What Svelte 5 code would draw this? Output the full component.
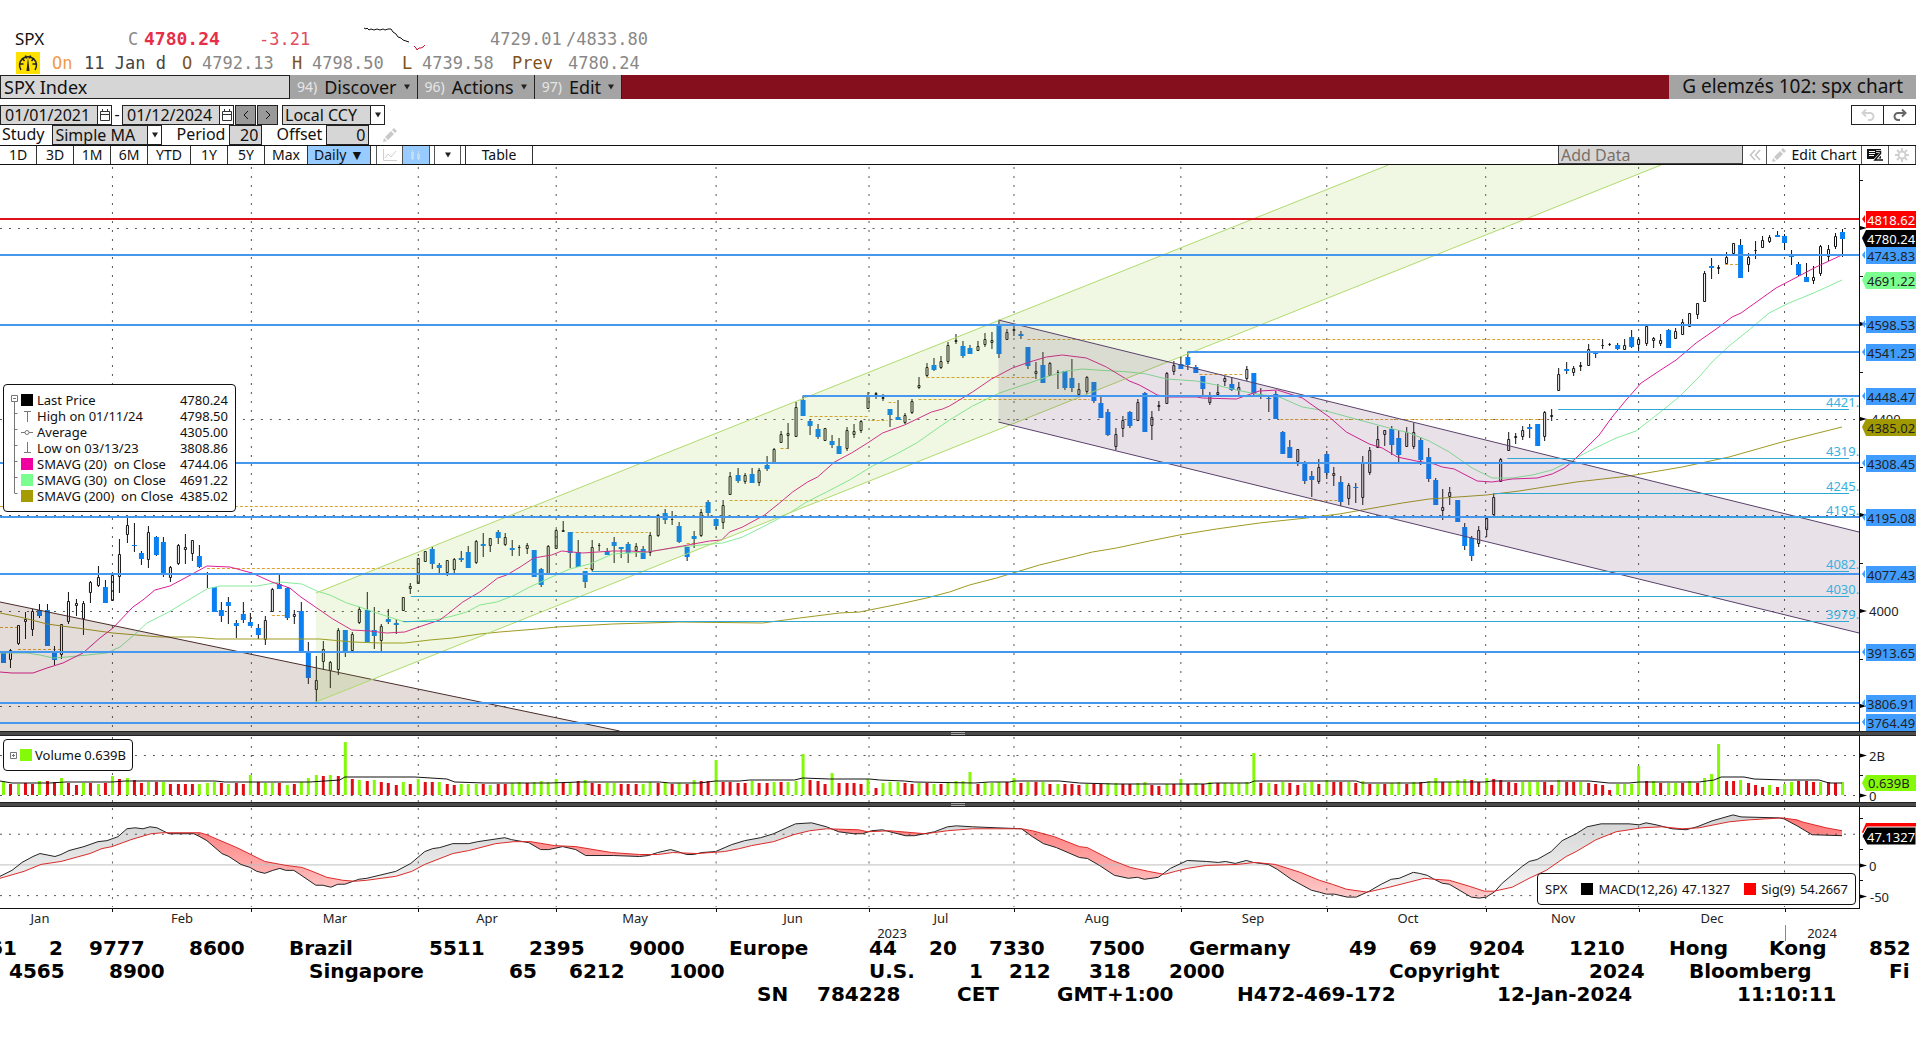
<script lang="ts">
  type Point = [number, number];

  // one entry per session: u/d, high, open-close top, open-close bottom, low
  const sessions = `
    d652,652,663,663 u649,650,660,668 u625,625,644,645 u612,619,622,639 u609,611,630,636 d604,610,616,618 d604,610,646,646 d646,653,660,665
    u624,624,655,659 u592,601,622,624 u599,603,606,616 u601,603,619,635 u581,582,593,603 u566,577,586,587 d580,587,603,603 u575,575,601,601
    u539,554,577,593 u518,525,535,543 d523,545,546,552 d551,553,559,565 u526,532,560,568 d536,537,555,556 d537,542,573,577 u566,567,578,582
    u544,545,564,565 u534,547,550,564 u540,540,554,561 d545,556,567,568 d572,573,574,588 d587,587,612,612 d602,610,616,622 d597,602,606,624
    d620,623,626,638 d602,614,620,623 d613,622,626,626 d624,628,635,639 u616,620,640,645 u588,589,612,612 d575,584,589,589 d587,588,618,620
    u610,614,617,624 d602,611,651,653 d642,653,678,684 u656,680,690,702 u641,649,662,670 u661,662,671,688 u628,630,670,675 d630,630,653,657
    u632,634,651,651 u607,609,623,624 d592,610,642,642 d607,630,636,649 u624,626,641,653 d609,619,622,624 d619,623,625,634 u597,597,611,611
    u583,586,589,594 u558,558,584,584 u551,551,562,562 d547,549,564,569 d563,565,568,575 u560,560,573,576 u558,559,570,575 d551,558,560,562
    d546,552,568,568 u540,541,563,564 d533,544,546,557 u538,538,546,552 d530,532,538,544 u533,537,545,546 d540,548,550,556 u545,547,548,556
    u543,545,549,554 d550,550,577,577 d568,569,585,587 u545,546,575,575 u529,530,549,549 u521,530,532,532 d532,532,553,568 d540,552,567,567
    d571,571,582,588 u540,547,570,571 u543,545,546,551 d548,551,555,555 d537,542,546,563 d547,547,549,558 d542,544,553,563 u543,546,551,557
    d546,549,559,559 u532,535,553,556 u514,515,536,537 d509,513,520,524 u511,519,520,525 d522,526,542,543 d547,547,557,561 d531,536,539,548
    u509,512,536,537 d500,502,513,518 d519,519,526,530 u500,505,523,529 u472,476,495,495 d468,475,481,483 u473,475,482,484 d468,474,483,483
    u468,470,483,486 d456,465,469,471 u448,449,464,464 u431,434,443,443 u423,433,436,449 u402,407,437,437 d396,400,416,416 d419,421,426,435
    d424,429,437,439 u428,428,441,441 d435,441,445,448 d438,446,454,454 u427,430,449,451 u424,431,435,438 u420,421,431,433 u392,396,409,409
    u392,393,395,399 u394,397,399,401 d409,409,415,427 d400,417,420,420 u413,415,423,424 u399,401,413,414 u377,385,388,389 u363,367,376,377
    d358,365,370,371 u356,361,368,369 u342,345,362,364 u334,340,342,344 d341,346,356,358 d345,348,354,354 u341,346,351,351 u333,339,345,347
    u332,340,343,349 d321,325,354,358 u329,332,340,340 u326,329,331,336 d331,334,336,339 d347,347,366,369 u362,371,374,379 d352,365,383,383
    u362,363,376,376 u370,372,373,389 d371,371,388,390 d359,378,388,392 u383,389,395,395 u376,377,392,394 d382,382,401,403 d397,403,418,418
    d409,412,435,436 u428,434,447,450 u416,420,429,437 d411,412,426,428 u399,402,421,421 d392,393,432,432 u411,417,426,440 u401,405,407,411
    u372,373,404,404 u361,365,372,375 d357,364,369,369 d352,357,365,370 d365,367,373,373 d376,376,389,397 u392,395,403,405 u384,392,395,396
    u376,378,382,386 d377,384,390,391 u382,387,391,395 u366,369,379,381 d373,373,394,397 u388,394,397,399 d396,398,399,412 d391,394,419,419
    d431,432,454,454 d440,447,458,458 u449,449,462,466 d461,462,481,484 d471,476,480,497 u459,467,482,484 d451,454,473,479 u467,473,476,486
    d476,482,502,506 u483,485,499,505 d483,487,488,503 u456,462,498,505 u447,450,473,475 u426,439,448,448 u430,430,435,446 d426,429,445,455
    d430,438,455,463 u427,432,447,447 u423,432,447,449 d437,440,460,465 d448,457,479,482 d478,480,505,505 u489,507,511,520 u487,492,497,505
    d500,500,522,522 d523,527,546,550 d536,538,556,561 u526,530,544,547 u518,518,530,537 u493,497,515,515 u458,459,482,482 u432,439,451,451
    u433,436,438,444 u426,430,437,440 d424,427,429,438 d424,424,446,446 u411,412,437,441 u409,415,417,421 u368,374,391,391 d362,369,371,374
    u366,368,373,376 u362,365,367,371 u344,349,366,366 d352,353,354,358 u339,345,346,349 u343,344,345,346 d343,345,349,350 u339,345,350,350
    d330,337,347,348 u337,339,345,352 u326,326,344,346 u337,338,341,348 u334,340,344,346 d329,330,348,348 u328,331,339,339 u319,322,335,335
    u313,313,327,327 u303,303,315,319 u271,273,302,302 d258,266,268,279 u265,267,269,274 u252,257,264,264 u243,243,254,254 d239,245,278,278
    u253,257,265,272 u241,250,251,259 u236,240,248,248 u235,237,242,243 d231,235,237,237 d234,236,243,250 d250,255,257,265 d262,264,275,276
    d263,277,282,282 u266,277,281,284 u245,246,274,276 u245,249,257,261 u233,236,247,249 d229,232,239,257`;

  const volumes = `
    g13 r11 g11 r12 r11 g14 r14 r13 g17 r12 r10 g12 r12 g11 r12 g19 r16 g17 r15 r12 g13 r13 g13 r11 r11 r11 r11 g11 g12 g13 r12 g11
    r12 r11 g20 r13 g12 g12 r12 g10 r11 g13 g17 g20 r19 g20 r19 g53 r16 g15 r14 g15 r13 r12 r10 g13 r11 g16 r13 r13 g13 r11 r10 g11
    g11 g11 r11 g10 r11 r11 g12 g13 r12 g13 g14 g13 g16 r12 g13 r14 g15 r12 r11 g12 g12 r11 r11 r11
    g11 g13 r12 g13 r11 g12 r11 g15 r14 r14 g35 r13 r13 r12 r12 g14 r12 r12 g13 r13 g13 g14 g41 r15 r14 r11 g22 r12 r12 r12 r11 g16
    r7 g12 g13 g13 r12 r11 g12 r12 g11 r11 g13 g14 g14 g23 r11 g12 g12 g13 r13 g17 r12 g13 r13 g13 r11 g11 r11 r11 r10 g11 r11 r11
    g12 g12 r11 r11 g12 g13 r10 r9 g11 r11 g16 r11 g12 r11 g13 r12 g12 g12 g12 g13 g42 r12 g12 r11 g13 r12 r10 g12 g13 r11 g15 r13
    r13 g13 r12 g14 r11 g11 r11 g12 g13 r11 g13 r13 g14
    g17 r13 g13 g15 g16 r15 r13 g17 r16 r15 r13 r12 g13 g13 g13 r13 r10 g15 r13 r13 g13 r12 r11 r10 r5 g11 g11 g11 g29 r14 g14 r12
    g12 g12 r12 g14 r12 g17 g21 g51 r14 r14 g15 r12 r10 r8 g10 r8 g11 g13 r14 r14 r13 g13 r13 r12 g13`;

  const dayX = (i: number) => Math.round(3 + 7.273 * i) + 0.5;

  const candles = sessions.trim().split(/\s+/).map((s, i) => {
    const [high, top, bottom, low] = s.slice(1).split(',').map(Number);
    return { x: dayX(i), up: s[0] === 'u', high, top, bottom, low };
  });

  const bars = volumes.trim().split(/\s+/).map((s, i) => ({
    x: dayX(i),
    color: s[0] === 'g' ? '#84fa08' : '#e00e14',
    h: Number(s.slice(1)),
  }));

  const sma20 = '0,672 12,673 33,673 47,668 63,663 83,653 100,638 113,628 133,607 143,600 155,590 170,586 187,577 207,566 230,567 252,573 272,582 290,588 301,597 317,608 333,619 352,630 370,631 387,633 405,632 419,627 440,620 448,614 463,602 480,592 498,578 507,575 522,566 534,558 552,555 562,551 583,553 613,551 630,551 648,552 660,550 683,546 710,541 722,540 730,532 743,527 765,515 780,503 793,492 808,482 818,477 835,462 852,453 868,443 883,433 905,425 932,412 943,409 950,406 973,392 992,379 1013,368 1030,362 1047,357 1063,355 1087,358 1107,367 1130,381 1140,385 1158,395 1168,397 1197,397 1203,398 1237,399 1260,391 1278,390 1303,398 1330,417 1347,432 1370,444 1383,448 1398,457 1417,461 1435,464 1443,467 1455,469 1478,481 1493,482 1513,479 1538,478 1553,474 1565,468 1573,462 1600,435 1613,417 1627,400 1642,383 1660,371 1677,360 1697,343 1720,327 1733,317 1742,313 1777,288 1800,276 1817,267 1843,255';
  const sma30 = '0,653 27,653 40,655 53,658 67,657 87,655 107,653 120,647 133,636 147,623 167,613 187,601 207,589 220,586 257,586 280,582 302,584 317,591 330,595 347,603 360,607 380,614 405,622 419,621 440,619 453,616 467,612 480,605 497,602 513,596 530,587 552,577 570,569 590,564 613,554 647,552 680,547 723,543 743,537 763,527 790,513 807,502 827,492 850,480 873,466 897,454 917,443 937,429 950,420 973,406 1000,393 1030,383 1050,376 1067,371 1083,369 1097,370 1130,372 1147,374 1167,379 1197,381 1217,385 1237,390 1257,394 1280,397 1303,407 1327,411 1360,420 1390,428 1410,433 1430,441 1450,452 1473,468 1493,478 1513,478 1533,475 1553,470 1577,458 1590,451 1617,438 1637,431 1660,413 1680,397 1700,377 1713,362 1730,346 1750,330 1770,313 1790,303 1817,292 1843,280';
  const sma200 = '0,613 20,617 47,624 77,628 113,633 160,637 193,637 217,639 320,639 353,642 380,643 405,643 430,640 453,638 480,634 500,632 537,629 557,627 613,624 680,622 763,623 800,618 840,613 860,612 900,604 927,598 950,592 970,585 997,578 1017,572 1040,565 1077,556 1093,552 1117,548 1150,541 1180,535 1217,529 1260,523 1307,518 1340,514 1380,507 1403,503 1430,499 1487,495 1520,491 1577,482 1630,476 1683,467 1730,457 1783,442 1827,431 1843,427';
  const volumeAvg = '0,781 12,783 50,783 65,782 112,782 125,781 215,781 225,782 310,782 340,780 345,777 415,777 447,779 455,782 485,783 550,783 580,782 660,782 670,783 700,783 716,781 740,781 750,780 795,780 803,778 830,779 870,779 880,780 905,781 915,782 975,783 990,782 1010,782 1015,781 1060,781 1080,783 1115,784 1205,784 1215,783 1250,783 1255,781 1357,781 1363,783 1420,783 1430,782 1485,782 1493,781 1590,781 1610,783 1630,783 1640,782 1700,782 1715,780 1722,777 1745,777 1755,779 1785,780 1820,780 1830,783 1843,783';
  const macd = '0,877 12,871 22,863 33,857 40,854 55,857 61,855 69,851 84,847 98,842 107,841 118,837 127,829 135,828 143,829 150,827 157,828 169,834 194,834 200,837 207,841 222,854 229,857 241,865 250,868 257,872 265,874 273,871 280,869 286,871 294,871 300,875 316,886 323,886 331,888 338,885 345,885 359,880 367,879 396,872 411,864 425,852 433,849 440,848 453,844 469,844 478,842 505,838 512,840 529,843 541,850 549,850 563,847 576,850 586,856 614,856 640,857 649,856 658,853 671,850 678,852 687,855 694,855 702,853 716,852 732,845 745,841 761,838 774,834 787,828 796,824 812,823 827,827 839,832 854,834 863,834 872,831 883,830 894,833 906,836 915,836 935,832 948,827 957,826 973,827 997,828 1022,829 1033,837 1044,844 1057,848 1080,858 1088,859 1100,866 1115,876 1129,879 1138,878 1145,880 1159,878 1171,869 1188,861 1207,862 1219,863 1226,862 1236,864 1247,861 1254,863 1269,865 1278,870 1292,880 1312,891 1320,893 1327,895 1335,895 1348,898 1357,898 1370,892 1382,885 1392,880 1400,879 1414,873 1420,874 1428,876 1435,880 1443,884 1450,885 1472,898 1480,899 1487,898 1495,893 1503,884 1523,867 1530,862 1538,860 1552,852 1563,841 1577,834 1588,827 1602,824 1630,824 1640,825 1647,823 1657,825 1673,829 1687,830 1698,827 1713,821 1734,815 1742,817 1780,818 1785,819 1798,826 1813,835 1843,836';
  const signal = '0,879 24,872 41,865 61,862 90,854 102,849 112,847 131,840 151,834 163,833 200,833 207,835 216,839 237,848 265,862 286,866 302,868 310,871 327,878 343,881 355,882 367,881 396,877 412,872 425,865 453,854 469,851 496,844 514,842 531,842 555,846 576,847 612,853 640,855 658,855 673,853 698,854 725,852 740,849 752,846 774,842 794,835 810,831 827,829 859,830 868,832 890,831 926,834 948,831 973,829 1022,829 1033,831 1055,837 1080,847 1088,848 1113,861 1131,868 1149,872 1165,875 1176,872 1188,869 1207,866 1238,865 1256,863 1276,865 1301,873 1320,881 1333,885 1347,890 1368,893 1390,888 1425,879 1435,880 1450,881 1470,887 1485,892 1495,892 1513,888 1530,879 1547,871 1567,857 1577,852 1597,840 1617,832 1643,828 1663,827 1683,829 1700,828 1730,822 1750,820 1783,818 1798,820 1803,822 1827,828 1843,831';

  const parse = (s: string) => s.split(' ').map((p) => p.split(',').map(Number) as Point);

  function valueAt(line: Point[], x: number) {
    const i = line.findIndex((p) => p[0] >= x);
    if (i < 1) return line[0][1];
    const [x0, y0] = line[i - 1];
    const [x1, y1] = line[i];
    return y0 + ((y1 - y0) * (x - x0)) / (x1 - x0);
  }

  // split the space between MACD and its signal wherever the two lines cross
  function macdAreas() {
    const a = parse(macd);
    const b = parse(signal);
    const areas: { above: boolean; d: string }[] = [];
    let top: string[] = [];
    let base: string[] = [];
    let above = true;
    for (let x = 0; x <= 1843; x += 1) {
      const ya = valueAt(a, x);
      const yb = valueAt(b, x);
      top.push(`${x},${ya.toFixed(1)}`);
      base.unshift(`${x},${yb.toFixed(1)}`);
      if (ya < yb !== above || x === 1843) {
        areas.push({ above, d: [...top, ...base].join(' ') });
        top = [top[top.length - 1]];
        base = [base[0]];
        above = ya < yb;
      }
    }
    return areas;
  }
  const areas = macdAreas();

  const monthLines = [112.5, 251.5, 418.5, 556.5, 716.5, 869.5, 1014.5, 1181.5, 1327.5, 1486.5, 1639.5, 1785.5];
  const months: [string, number][] = [
    ['Jan', 40], ['Feb', 182], ['Mar', 335], ['Apr', 487], ['May', 635], ['Jun', 793],
    ['Jul', 941], ['Aug', 1097], ['Sep', 1253], ['Oct', 1408], ['Nov', 1563], ['Dec', 1712],
  ];
  const priceGrid = [228.5, 419.5, 515.5, 611.5, 706.5];

  const levels = [
    { x: 0, y: 255 }, { x: 0, y: 325 }, { x: 1188, y: 352 }, { x: 803, y: 396 }, { x: 0, y: 463 },
    { x: 0, y: 517 }, { x: 0, y: 574 }, { x: 0, y: 652 }, { x: 0, y: 703 }, { x: 0, y: 723 },
  ];
  const gaps = [
    { x: 1559, y: 409.5, text: '4421.' }, { x: 1508, y: 458.5, text: '4319.' }, { x: 1494, y: 493.5, text: '4245.' },
    { x: 1494, y: 517.5, text: '4195.' }, { x: 592, y: 571.5, text: '4082.' }, { x: 411, y: 596.5, text: '4030.' },
    { x: 403, y: 621.5, text: '3979.' },
  ];
  const openGaps = [
    [0, 708, 506.5], [207, 418, 568.5], [0, 17, 627.5], [18, 60, 649.5], [272, 287, 615.5], [571, 648, 532.5],
    [585, 592, 568.5], [687, 695, 543.5], [730, 1340, 500.5], [781, 788, 448.5], [810, 868, 416.5], [872, 888, 420.5],
    [889, 896, 402.5], [919, 1090, 399.5], [927, 1037, 377.5], [1028, 1603, 339.5], [1200, 1245, 374.5],
    [1281, 1546, 419.5], [1605, 1627, 352.5], [1726, 1740, 264.5],
  ];

  const tags = [
    { y: 324, text: '4598.53', kind: 'support' }, { y: 352, text: '4541.25', kind: 'support' },
    { y: 396, text: '4448.47', kind: 'support' }, { y: 463, text: '4308.45', kind: 'support' },
    { y: 517, text: '4195.08', kind: 'support' }, { y: 574, text: '4077.43', kind: 'support' },
    { y: 652, text: '3913.65', kind: 'support' }, { y: 703, text: '3806.91', kind: 'support' },
    { y: 722, text: '3764.49', kind: 'support' }, { y: 255, text: '4743.83', kind: 'support' },
    { y: 219, text: '4818.62', kind: 'target' }, { y: 238, text: '4780.24', kind: 'last' },
    { y: 280, text: '4691.22', kind: 'sma30' }, { y: 427, text: '4385.02', kind: 'sma200' },
  ];

  const legend = [
    { mark: 'black', label: 'Last Price', value: '4780.24' },
    { mark: 'high', label: 'High on 01/11/24', value: '4798.50' },
    { mark: 'avg', label: 'Average', value: '4305.00' },
    { mark: 'low', label: 'Low on 03/13/23', value: '3808.86' },
    { mark: 'pink', label: 'SMAVG (20)  on Close', value: '4744.06' },
    { mark: 'green', label: 'SMAVG (30)  on Close', value: '4691.22' },
    { mark: 'olive', label: 'SMAVG (200)  on Close', value: '4385.02' },
  ];

  const ranges = ['1D', '3D', '1M', '6M', 'YTD', '1Y', '5Y', 'Max'];
  const menus = [
    { key: '94)', label: 'Discover' },
    { key: '96)', label: 'Actions' },
    { key: '97)', label: 'Edit' },
  ];

  // the footer is set on a grid of character cells
  const footer = [
    '61 2 9777 8600 Brazil 5511 2395 9000 Europe 44 20 7330 7500 Germany 49 69 9204 1210 Hong Kong 852',
    ' 4565 8900      Singapore 65 6212 1000      U.S. 1 212 318 2000       Copyright 2024 Bloomberg Fi',
    ' '.repeat(38) + 'SN 784228 CET  GMT+1:00 H472-469-172 12-Jan-2024 11:10:11',
  ].map((line) => [...line.matchAll(/\S+/g)].map((m) => ({ text: m[0], col: m.index + 1 })));
</script>

{#snippet arrow()}
  <svg class="arrow" viewBox="0 0 6 6" width="6" height="6"><path d="M0 0.5h6L3 5.5z" /></svg>
{/snippet}

{#snippet calendar()}
  <svg viewBox="0 0 12 13" width="12" height="13" fill="none" stroke="#333">
    <path d="M1.5 2.5h9v9h-9zM1.5 5.5h9M3.5 0v3M8.5 0v3" />
  </svg>
{/snippet}

{#snippet pencil()}
  <svg viewBox="0 0 14 14" width="14" height="14" fill="#c9c9c9">
    <path d="M0 14l1-4 3 3zM2 9l6-6 3 3-6 6zM9 2l2-2 3 3-2 2z" />
  </svg>
{/snippet}

<div class="terminal">
  <header class="quote">
    <div class="quote-row first">
      <span class="black">SPX</span>
      <span>C</span>
      <strong>4780.24</strong>
      <span class="loss">-3.21</span>
      <svg viewBox="0 0 62 24" width="62" height="24" fill="none">
        <path d="M0 1l2 1 1-1 2 2 2-1 3 1 3-1 3 1 3-1 2 1 3-1 3 0 2 3 3 2 2 3 3 1 2 2 3 1 3 1" stroke="#111" />
        <path d="M50 19l2 2 1 2 2-2 2 0 2-1 2-2" stroke="#c8102e" />
      </svg>
      <span>4729.01</span>
      <span>/4833.80</span>
    </div>
    <div class="quote-row second">
      <svg viewBox="0 0 24 22" width="24" height="22">
        <rect width="24" height="22" fill="#ffe100" />
        <path d="M5 18a8.500 8.500 0 1 1 14 0M3.500 12h4M16.500 12h4M6 6l2.500 3M18 6l-2.500 3M9.500 3.500l1 3M14.500 3.500l-1 3" fill="none" stroke="#222" stroke-width="1.500" />
        <path d="M12 5l1.500 14h-3z" fill="#222" />
      </svg>
      <span class="on">On</span>
      <span class="dark">11 Jan d</span>
      <span class="key">O</span><span>4792.13</span>
      <span class="key">H</span><span>4798.50</span>
      <span class="key">L</span><span>4739.58</span>
      <span class="key">Prev</span><span>4780.24</span>
    </div>
  </header>

  <nav class="menu">
    <input class="ticker" aria-label="Security" value="SPX Index" />
    {#each menus as m}
      <button class="menu-item"><span class="num">{m.key}</span>{m.label}{@render arrow()}</button>
    {/each}
    <h1>G elemzés 102: spx chart</h1>
  </nav>

  <div class="controls">
    <input class="date" aria-label="From" value="01/01/2021" />
    <button class="cal" aria-label="Pick start date">{@render calendar()}</button>
    <span class="dash">-</span>
    <input class="date" aria-label="To" value="01/12/2024" />
    <button class="cal" aria-label="Pick end date">{@render calendar()}</button>
    <button class="step" aria-label="Earlier"><svg viewBox="0 0 8 10" width="8" height="10"><path d="M6 1L2 5l4 4" /></svg></button>
    <button class="step" aria-label="Later"><svg viewBox="0 0 8 10" width="8" height="10"><path d="M2 1l4 4-4 4" /></svg></button>
    <div class="select ccy">
      <select aria-label="Currency"><option>Local CCY</option></select>
      <span class="drop">{@render arrow()}</span>
    </div>
    <div class="history">
      <button aria-label="Undo">
        <svg viewBox="0 0 14 13" width="14" height="13" fill="none" stroke="#d2d2d2" stroke-width="2"><path d="M3 4h6a3.500 3.500 0 0 1 0 7H7M5 0.500L1.500 4 5 7.500" /></svg>
      </button>
      <button aria-label="Redo">
        <svg viewBox="0 0 14 13" width="14" height="13" fill="none" stroke="#666" stroke-width="2"><path d="M11 4H5a3.500 3.500 0 0 0 0 7h2M9 0.500L12.500 4 9 7.500" /></svg>
      </button>
    </div>
  </div>

  <div class="study">
    <label for="study">Study</label>
    <div class="select ma">
      <select id="study"><option>Simple MA</option></select>
      <span class="drop">{@render arrow()}</span>
    </div>
    <label class="period" for="period">Period</label>
    <input id="period" class="num-box" value="20" />
    <label class="offset" for="offset">Offset</label>
    <input id="offset" class="num-box wide" value="0" />
    <button class="pen" aria-label="Edit study">{@render pencil()}</button>
  </div>

  <div class="toolbar">
    {#each ranges as r}
      <button class="range" class:wide={r.length > 2}>{r}</button>
    {/each}
    <button class="daily">Daily ▼</button>
    <button class="tool line" aria-label="Line chart">
      <svg viewBox="0 0 14 12" width="14" height="12" fill="none" stroke="#cfcfcf"><path d="M0.500 0v11.500H14M2 9l3-4 3 3 5-6" /></svg>
    </button>
    <button class="tool active" aria-label="Candle chart">
      <svg viewBox="0 0 12 12" width="12" height="12" fill="#c4dcf4"><path d="M1 3h3v7H1zM2 1h1v10H2zM7 5h3v5H7zM8 2h1v9H8z" /></svg>
    </button>
    <button class="tool more" aria-label="More chart types">{@render arrow()}</button>
    <button class="table-tab">Table</button>
    <input class="add" aria-label="Add data" placeholder="Add Data" />
    <button class="tool collapse" aria-label="Collapse">
      <svg viewBox="0 0 12 12" width="12" height="12" fill="none" stroke="#c4c4c4" stroke-width="1.500"><path d="M6 1L1.500 6 6 11M11 1L6.500 6 11 11" /></svg>
    </button>
    <button class="edit-chart">{@render pencil()}Edit Chart</button>
    <button class="tool" aria-label="Annotations">
      <svg viewBox="0 0 16 12" width="16" height="12" fill="none" stroke="#111">
        <path d="M0 0h14v10H0z" fill="#111" stroke="none" />
        <path d="M2 2.500h6M2 4.500h6M2 6.500h5" stroke="#fff" />
        <path d="M9 2.500h5v2L8 11h8" stroke="#fff" stroke-width="3" />
        <path d="M9 2.500h4.500v2L8 11h8" stroke-width="1.500" />
      </svg>
    </button>
    <button class="tool" aria-label="Settings">
      <svg viewBox="0 0 16 16" width="16" height="16" fill="none" stroke="#d0d0d0" stroke-width="2">
        <circle cx="8" cy="8" r="3.500" />
        <path d="M8 1v3M8 12v3M1 8h3M12 8h3M3 3l2 2M11 11l2 2M13 3l-2 2M5 11l-2 2" />
      </svg>
    </button>
  </div>

  <main class="charts">
    <section class="panel">
      <svg class="plot" viewBox="0 165 1860 566" height="566" preserveAspectRatio="none">
        <g class="grid">
          {#each monthLines as x}<line x1={x} x2={x} y1="167" y2="731" />{/each}
          {#each priceGrid as y}<line x1="0" x2="1860" y1={y} y2={y} />{/each}
        </g>
        {#each openGaps as [x1, x2, y]}<line class="open-gap" {x1} {x2} y1={y} y2={y} />{/each}
        <g class="candles">
          {#each candles as c}
            {#if c.up}
              <path d="M{c.x} {c.high}V{c.top}M{c.x} {c.bottom}V{c.low}M{c.x - 1} {c.top + 0.5}h2V{c.bottom - 0.5}h-2z" />
            {:else}
              <path d="M{c.x} {c.high}V{c.low}" />
              <rect x={c.x - 2.5} y={c.top} width="5" height={Math.max(1, c.bottom - c.top)} />
            {/if}
          {/each}
        </g>
        <polyline class="ma" points={sma200} stroke="#a09a20" />
        <polyline class="ma" points={sma30} stroke="#86eb9c" />
        <polyline class="ma" points={sma20} stroke="#dc1e96" />
        <polygon points="0,602 620,731 0,731" fill="#5a3218" fill-opacity="0.17" />
        <polyline class="edge" points="0,602 620,731" stroke="#4a2b2b" />
        <polygon points="316,593 1389,165 1662,165 316,702" fill="#84c81e" fill-opacity="0.12" />
        <polyline class="edge" points="316,593 1389,165" stroke="#b0da6c" />
        <polyline class="edge" points="316,702 1662,165" stroke="#b0da6c" />
        <polygon points="999,320 1860,532 1860,633 999,422" fill="#643c64" fill-opacity="0.15" />
        <polyline class="edge" points="999,320 1860,532" stroke="#58406a" />
        <polyline class="edge" points="999,422 1860,633" stroke="#58406a" />
        {#each levels as l}<line class="level" x1={l.x} x2="1860" y1={l.y} y2={l.y} />{/each}
        {#each gaps as g}
          <line class="gap" x1={g.x} x2="1850" y1={g.y} y2={g.y} />
          <text class="gap-label" x="1827" y={g.y - 2}>{g.text}</text>
        {/each}
        <line class="level target" x1="0" x2="1860" y1="219" y2="219" />
      </svg>
      <svg class="axis" viewBox="1860 165 56 566" width="56" height="566">
        {#each [180.5, 276.5, 372.5, 467.5, 563.5, 659.5] as y}<path class="tick" d="M1860 {y}h3" />{/each}
        {#each [228, 324, 419, 515, 611, 706] as y}<path d="M1860 {y - 2}l7 2-7 2z" />{/each}
        <text x="1869" y="616">4000</text>
        <text x="1871" y="424">4400</text>
        {#each tags as t}
          <g class="tag {t.kind}">
            {#if t.kind === 'support' || t.kind === 'target'}
              <path d="M1862 {t.y}l3-4v8zM1866 {t.y - 8}h50v17h-50z" />
            {:else}
              <path d="M1862 {t.y}l4-8h50v17h-50z" />
            {/if}
            <text x="1867" y={t.y + 6}>{t.text}</text>
          </g>
        {/each}
      </svg>
      <div class="legend price-legend">
        <svg class="tree" viewBox="0 0 10 106" width="10" height="106" fill="none" stroke="#777">
          <path d="M0.500 0.500h6v6h-6zM2 3.500h3M3.500 7v91M3.500 18.500h3M3.500 34.500h3M3.500 50.500h3M3.500 66.500h3M3.500 82.500h3M3.500 98.500h3" />
        </svg>
        <div class="legend-rows">
          {#each legend as row}
            <div class="legend-row">
              <svg class="mark {row.mark}" viewBox="0 0 12 12" width="12" height="12">
                {#if row.mark === 'high'}
                  <path d="M3 1.500h7M6.500 1v11" />
                {:else if row.mark === 'low'}
                  <path d="M3 10.500h7M6.500 0v11" />
                {:else if row.mark === 'avg'}
                  <path d="M0 6.500h4M8 6.500h4" /><circle cx="6" cy="6.500" r="2" />
                {:else}
                  <rect width="12" height="12" />
                {/if}
              </svg>
              <span class="label">{row.label}</span>
              <span>{row.value}</span>
            </div>
          {/each}
        </div>
      </div>
    </section>

    <div class="splitter"><i></i></div>

    <section class="panel">
      <svg class="plot" viewBox="0 736 1860 66" height="66" preserveAspectRatio="none">
        <g class="grid">
          {#each monthLines as x}<line x1={x} x2={x} y1="737" y2="802" />{/each}
          <line x1="0" x2="1860" y1="755.500" y2="755.500" />
          <line x1="0" x2="1860" y1="795.500" y2="795.500" />
        </g>
        {#each bars as b}<rect x={b.x - 1.5} y={795 - b.h} width="3" height={b.h} fill={b.color} />{/each}
        <polyline class="ma" points={volumeAvg} stroke="#111" />
      </svg>
      <svg class="axis" viewBox="1860 736 56 66" width="56" height="66">
        <path class="tick" d="M1860 775.500h3" />
        <path d="M1860 753.500l7 2-7 2zM1860 793.500l7 2-7 2z" />
        <text x="1869" y="761">2B</text>
        <text x="1869" y="801">0</text>
        <g class="tag vol"><path d="M1862 783l4-8h50v16h-50z" /><text x="1868" y="788">0.639B</text></g>
      </svg>
      <div class="legend volume-legend">
        <svg viewBox="0 0 7 7" width="7" height="7" fill="none" stroke="#777"><path d="M0.500 0.500h6v6h-6zM2 3.500h3M3.500 2v3" /></svg>
        <i class="swatch lime"></i>
        <span>Volume</span><span>0.639B</span>
      </div>
    </section>

    <div class="splitter"><i></i></div>

    <section class="panel last-panel">
      <svg class="plot" viewBox="0 807 1860 102" height="102" preserveAspectRatio="none">
        <defs>
          <linearGradient id="fall" gradientUnits="userSpaceOnUse" x1="0" x2="0" y1="815" y2="900">
            <stop offset="0" stop-color="#ff7474" /><stop offset="1" stop-color="#ffcccc" />
          </linearGradient>
          <linearGradient id="rise" gradientUnits="userSpaceOnUse" x1="0" x2="0" y1="815" y2="900">
            <stop offset="0" stop-color="#d2d2d2" /><stop offset="1" stop-color="#f8f8f8" />
          </linearGradient>
        </defs>
        {#each areas as a}<polygon points={a.d} fill={a.above ? 'url(#rise)' : 'url(#fall)'} />{/each}
        <g class="grid">
          {#each monthLines as x}<line x1={x} x2={x} y1="808" y2="908" />{/each}
          <line x1="0" x2="1860" y1="834.500" y2="834.500" />
          <line x1="0" x2="1860" y1="896.500" y2="896.500" />
        </g>
        <line x1="0" x2="1860" y1="865.500" y2="865.500" stroke="#bdbdbd" />
        <polyline class="ma" points={macd} stroke="#222" />
        <polyline class="ma" points={signal} stroke="#dc2828" />
      </svg>
      <svg class="axis" viewBox="1860 807 56 102" width="56" height="102">
        {#each [818.5, 849.5, 880.5] as y}<path class="tick" d="M1860 {y}h3" />{/each}
        <path d="M1860 863.500l7 2-7 2zM1860 894.500l7 2-7 2z" />
        <text x="1869" y="871">0</text>
        <text x="1870" y="902">-50</text>
        <g class="tag target"><path d="M1862 832l4-9h50v15h-50z" /></g>
        <path d="M1862 836l5-9h49v18h-49z" stroke="#fff" />
        <g class="tag last"><text x="1867" y="842">47.1327</text></g>
      </svg>
      <div class="legend macd-legend">
        <span>SPX</span>
        <i class="swatch"></i><span>MACD(12,26)</span><span>47.1327</span>
        <i class="swatch red"></i><span>Sig(9)</span><span>54.2667</span>
      </div>
    </section>

    <svg class="months" viewBox="0 909 1916 28" height="28" preserveAspectRatio="none">
      {#each monthLines as x}<path class="tick" d="M{x} 909v3" />{/each}
      {#each months as [name, x]}<text {x} y="923" text-anchor="middle">{name}</text>{/each}
      <path d="M1785.500 925v16" stroke="#888" />
      <text x="892" y="938" text-anchor="middle">2023</text>
      <text x="1822" y="938" text-anchor="middle">2024</text>
    </svg>
  </main>

  <footer>
    {#each footer as line}
      <p>
        {#each line as word}
          <span style="grid-column: {word.col} / span {word.text.length}">{word.text}</span>
        {/each}
      </p>
    {/each}
  </footer>
</div>

<style>
  :global(body) {
    margin: 0;
    background: #fff;
  }

  .terminal {
    padding-top: 26px;
    overflow: hidden;
    font-family: 'Noto Sans', sans-serif;
    font-size: 16px;
    color: #111;
  }

  .terminal * {
    box-sizing: border-box;
  }

  button, input, select {
    margin: 0;
    padding: 0;
    border: 0;
    border-radius: 0;
    background: none;
    font: inherit;
    color: inherit;
    appearance: none;
  }

  button {
    display: flex;
    align-items: center;
    justify-content: center;
    white-space: nowrap;
  }

  input {
    min-width: 0;
  }

  /* quote header */
  .quote {
    font-family: 'DejaVu Sans Mono', monospace;
    font-size: 17px;
    color: #888;
  }

  .quote-row {
    display: grid;
    align-items: center;
    height: 25px;
    white-space: nowrap;
  }

  .quote-row.first {
    padding-left: 15px;
    grid-template-columns: 113px 16px 115px 105px 126px 76px auto;
  }

  .quote-row.second {
    height: 24px;
    padding-left: 16px;
    grid-template-columns: 36px 32px 98px 20px 90px 20px 90px 20px 90px 56px auto;
  }

  .quote strong {
    font-size: 18px;
    color: #e62e48;
  }

  .quote .black {
    font-family: 'Noto Sans', sans-serif;
    color: #111;
  }

  .loss { color: #e24a60; }
  .on { color: #f09a4a; }
  .dark { color: #444; }
  .key { color: #80521a; }

  /* menu bar */
  .menu {
    display: flex;
    height: 24px;
    background: #860f1e;
    font-size: 18px;
    line-height: 22px;
  }

  .ticker {
    width: 290px;
    padding-left: 3px;
    border: 1px solid #222;
    background: #d6d6d6;
  }

  .menu-item {
    gap: 7px;
    padding: 0 7px;
    border-right: 1px solid #222;
    background: #a4a4a4;
  }

  .menu-item .num {
    font-size: 14px;
    color: #e6e6e6;
  }

  .arrow {
    flex: none;
    fill: #222;
  }

  .menu h1 {
    margin: 0 0 0 auto;
    padding: 0 13px;
    background: #a4a4a4;
    font-size: 19px;
    font-weight: 400;
  }

  /* dates and study */
  .controls, .study {
    display: flex;
    align-items: stretch;
    height: 20px;
    line-height: 18px;
  }

  .controls {
    margin-top: 6px;
  }

  .date {
    width: 98px;
    padding-left: 4px;
    border: 1px solid #222;
    background: #d6d6d6;
  }

  .cal {
    width: 14px;
    border: 1px solid #222;
    border-left: 0;
  }

  .dash {
    width: 10px;
    text-align: center;
  }

  .step {
    width: 21px;
    margin-left: 1px;
    border: 1px solid #222;
    background: #999;
  }

  .step path {
    fill: none;
    stroke: #111;
  }

  .select {
    display: flex;
    border: 1px solid #222;
  }

  .select select {
    flex: 1;
    min-width: 0;
    padding-left: 2px;
    background: #d6d6d6;
    line-height: 18px;
  }

  .drop {
    display: flex;
    align-items: center;
    justify-content: center;
    width: 14px;
    border-left: 1px solid #222;
  }

  .ccy {
    width: 103px;
    margin-left: 4px;
  }

  .history {
    display: flex;
    width: 65px;
    margin-left: auto;
    border: 1px solid #222;
  }

  .history button {
    flex: 1;
  }

  .history button + button {
    border-left: 1px solid #222;
  }

  .study {
    padding-left: 2px;
  }

  .ma.select {
    width: 110px;
    margin-left: 8px;
  }

  .period, .offset {
    margin-left: 14px;
    margin-right: 4px;
  }

  .num-box {
    width: 33px;
    padding-right: 3px;
    border: 1px solid #222;
    background: #d6d6d6;
    text-align: right;
  }

  .num-box.wide {
    width: 43px;
  }

  .pen {
    margin-left: 14px;
  }

  /* range toolbar */
  .toolbar {
    display: flex;
    height: 20px;
    border-top: 1px solid #111;
    border-bottom: 1px solid #111;
    font-size: 14px;
    line-height: 18px;
  }

  .range {
    width: 37px;
    border-right: 1px solid #333;
  }

  .range.wide {
    width: 43px;
  }

  .daily {
    width: 63px;
    border-right: 1px solid #333;
    background: #98cbff;
  }

  .tool {
    width: 27px;
    border-right: 1px solid #555;
  }

  .tool.line {
    margin-left: 5px;
    border-left: 1px solid #555;
  }

  .tool.active {
    background: #98cbff;
  }

  .tool.more {
    margin-left: 4px;
    border-left: 1px solid #555;
  }

  .table-tab {
    width: 68px;
    margin-left: 4px;
    border: solid #333;
    border-width: 0 1px;
  }

  .add {
    width: 185px;
    margin-left: auto;
    padding-left: 2px;
    border: 1px solid #444;
    border-top: 0;
    background: #d6d6d6;
    font-size: 16px;
  }

  .add::placeholder {
    color: #7a6f68;
    opacity: 1;
  }

  .tool.collapse {
    width: 24px;
  }

  .edit-chart {
    gap: 6px;
    width: 95px;
    border-right: 1px solid #555;
  }

  /* charts */
  .panel {
    position: relative;
    display: grid;
    grid-template-columns: 1fr 56px;
  }

  .charts svg {
    display: block;
  }

  .plot {
    width: 100%;
    border-right: 1px solid #111;
  }

  .last-panel .plot {
    border-bottom: 1px solid #111;
  }

  .charts .months {
    width: 100%;
    overflow: visible;
  }

  .charts text {
    font-family: 'Noto Sans', sans-serif;
    font-size: 13px;
    fill: #222;
  }

  .grid line {
    stroke: #555;
    stroke-dasharray: 2 7;
  }

  .open-gap {
    stroke: #dfa02c;
    stroke-dasharray: 3 2;
  }

  .candles path {
    fill: none;
    stroke: #111;
  }

  .candles rect {
    fill: #0a80f5;
  }

  .ma, .edge {
    fill: none;
  }

  .level {
    stroke: #4698ee;
    stroke-width: 2;
  }

  .target.level {
    stroke: #de1018;
  }

  .gap {
    stroke: #2fa8d4;
  }

  .charts .gap-label {
    fill: #38b0e0;
  }

  .tick {
    stroke: #111;
  }

  .tag.support path { fill: #409cff; }
  .tag.target path { fill: #f00; }
  .tag.last path { fill: #000; }
  .tag.sma30 path { fill: #7cff90; }
  .tag.sma200 path { fill: #a09a00; }
  .tag.vol path { fill: #84fa08; }
  .charts .tag.target text, .charts .tag.last text { fill: #fff; }

  .legend {
    position: absolute;
    display: flex;
    border: 1px solid #111;
    border-radius: 4px;
    background: #fff;
    font-size: 13px;
    line-height: 16px;
    white-space: pre;
  }

  .price-legend {
    top: 219px;
    left: 3px;
    width: 233px;
    padding: 7px;
  }

  .tree {
    margin-top: 3px;
  }

  .legend-rows {
    flex: 1;
  }

  .legend-row {
    display: flex;
    align-items: center;
    height: 16px;
  }

  .legend-row .label {
    flex: 1;
    margin-left: 4px;
  }

  .mark path, .mark circle {
    fill: none;
    stroke: #777;
  }

  .mark.pink { fill: #f000a0; }
  .mark.green { fill: #78ff90; }
  .mark.olive { fill: #a49c00; }

  .volume-legend {
    top: 3px;
    left: 3px;
    align-items: center;
    gap: 3px;
    height: 32px;
    padding: 0 6px;
  }

  .macd-legend {
    right: 60px;
    bottom: 4px;
    align-items: center;
    gap: 5px;
    height: 32px;
    padding: 0 7px;
  }

  .macd-legend .swatch {
    margin-left: 9px;
  }

  .swatch {
    width: 12px;
    height: 12px;
    background: #000;
  }

  .swatch.lime { background: #84fa08; }
  .swatch.red { background: #f00; }

  .splitter {
    display: flex;
    justify-content: center;
    align-items: center;
    height: 5px;
    border: solid #222;
    border-width: 1px 0;
    background: #4a4a4a;
  }

  .splitter i {
    width: 14px;
    height: 3px;
    border: solid #aaa;
    border-width: 1px 0;
  }

  /* contact lines */
  footer {
    overflow: hidden;
    font-family: 'DejaVu Sans', sans-serif;
    font-size: 20px;
    font-weight: 700;
    line-height: 23px;
    color: #000;
  }

  footer p {
    display: grid;
    grid-template-columns: repeat(98, 20px);
    margin: 0 0 0 -11px;
  }

  footer p:last-child {
    margin-left: -3px;
  }

  footer span {
    white-space: nowrap;
  }
</style>
